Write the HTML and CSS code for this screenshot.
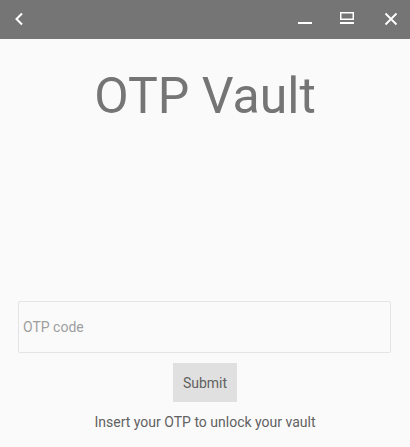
FILE: index.html
```html
<!DOCTYPE html>
<html>
<head>
<meta charset="utf-8">
<link rel="stylesheet" href="styles.css">
</head>
<body>
<div class="titlebar">
  <svg class="back" width="14" height="14" viewBox="0 0 14 14"><path d="M9 1.5 L3.5 7 L9 12.5" fill="none" stroke="#fff" stroke-width="2"/></svg>
  <div class="spacer"></div>
  <svg class="ctl" width="16" height="14" viewBox="0 0 16 14"><rect x="1" y="10" width="14" height="2" fill="#fff"/></svg>
  <svg class="ctl" width="16" height="14" viewBox="0 0 16 14"><rect x="1.75" y="0.75" width="12.5" height="6.5" fill="none" stroke="#fff" stroke-width="1.5"/><rect x="1" y="10" width="14" height="2" fill="#fff"/></svg>
  <svg class="ctl close" width="14" height="14" viewBox="0 0 14 14"><path d="M1.5 1.5 L12.5 12.5 M12.5 1.5 L1.5 12.5" stroke="#fff" stroke-width="1.8"/></svg>
</div>
<div class="main">
  <h1 class="title">OTP Vault</h1>
  <div class="grow"></div>
  <input class="otp" type="text" placeholder="OTP code">
  <button class="submit">Submit</button>
  <p class="hint">Insert your OTP to unlock your vault</p>
</div>
</body>
</html>
```
FILE: styles.css
```css
html, body {
  margin: 0;
  padding: 0;
  background: #fafafa;
  font-family: Roboto, "Noto Sans", sans-serif;
}
.titlebar {
  height: 39px;
  background: #757575;
  display: flex;
  align-items: center;
  padding: 0 12px 0 13px;
}
.back { display: block; margin-top: -2px; }
.spacer { flex: 1; }
.ctl { display: block; margin-top: -2px; }
.ctl + .ctl { margin-left: 26px; }
.close { margin-left: 29px !important; }
.main {
  height: 408px;
  display: flex;
  flex-direction: column;
  align-items: center;
  padding: 0 18px;
  box-sizing: border-box;
}
.title {
  margin: 28px 0 0;
  font-size: 50px;
  line-height: 58px;
  font-weight: 400;
  color: #757575;
}
.grow { flex: 1; }
.otp {
  align-self: stretch;
  height: 52px;
  box-sizing: border-box;
  border: 1px solid #e4e4e4;
  border-radius: 2px;
  background: #fafafa;
  padding: 0 4px;
  font-family: Roboto, sans-serif;
  font-size: 14px;
  color: #424242;
  outline: none;
  margin-right: 1px;
}
.otp::placeholder { color: #9e9e9e; }
.submit {
  margin-top: 10px;
  width: 64px;
  height: 39px;
  border: none;
  background: #e0e0e0;
  color: #616161;
  font-family: Roboto, sans-serif;
  font-size: 14px;
  padding: 0;
}
.hint {
  margin: 10px 0 15px;
  font-size: 14px;
  line-height: 20px;
  color: #616161;
}
```
